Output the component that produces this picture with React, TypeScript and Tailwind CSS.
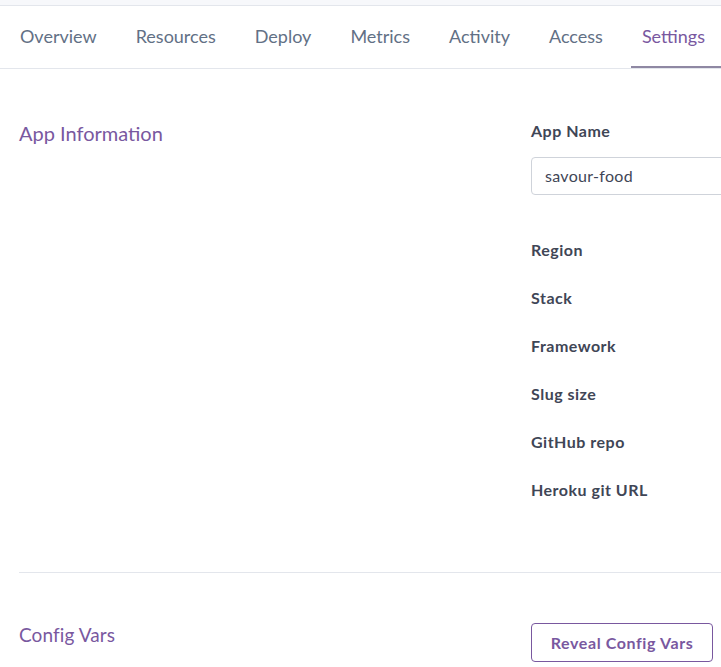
import React from 'react';

const tabs = ['Overview', 'Resources', 'Deploy', 'Metrics', 'Activity', 'Access', 'Settings'];

const fields = ['Region', 'Stack', 'Framework', 'Slug size', 'GitHub repo', 'Heroku git URL'];

export default function App() {
  return (
    <div className="min-h-screen w-[721px] overflow-hidden bg-white font-['Lato','Open_Sans',sans-serif]">
      <div className="h-[6px] border-b border-[#e3e6ec] bg-[#f7f8fb]" />
      <nav className="flex h-[63px] gap-[17px] border-b border-[#e3e6ec] pl-[9px]">
        {tabs.map(tab => (
          <div
            key={tab}
            className={`flex items-center whitespace-nowrap px-[11px] text-[18px] ${
              tab === 'Settings'
                ? 'border-b-2 border-[#8f88a3] pr-[30px] text-[#79589f]'
                : 'border-b-2 border-transparent text-[#627085]'
            }`}
          >
            <span className="mt-[1px]">{tab}</span>
          </div>
        ))}
      </nav>

      <div className="pl-[19px]">
        <section className="flex pt-[52px] pb-[72px]">
          <h2 className="w-[512px] shrink-0 text-[20px] leading-[24px] text-[#79589f]">App Information</h2>
          <div className="w-[300px] shrink-0">
            <div className="text-[16px] font-bold leading-[20px] tracking-[0.5px] text-[#3f4656]">App Name</div>
            <div className="mt-[16px] flex h-[38px] items-center rounded-[4px] border border-[#cfd3da] px-[13px] text-[16px] tracking-[0.3px] text-[#3f4656]">
              savour-food
            </div>
            <div className="mt-[45px] flex flex-col gap-[28px]">
              {fields.map(f => (
                <div key={f} className="text-[16px] font-bold leading-[20px] tracking-[0.5px] text-[#3f4656]">
                  {f}
                </div>
              ))}
            </div>
          </div>
        </section>

        <div className="border-t border-[#e3e6ec]" />

        <section className="flex items-start pt-[50px]">
          <h2 className="w-[512px] shrink-0 text-[19px] leading-[24px] tracking-[0.1px] text-[#79589f]">Config Vars</h2>
          <button className="h-[39px] w-[182px] rounded-[4px] border border-[#79589f] text-[16px] font-bold tracking-[0.6px] text-[#79589f]">
            Reveal Config Vars
          </button>
        </section>
      </div>
    </div>
  );
}
